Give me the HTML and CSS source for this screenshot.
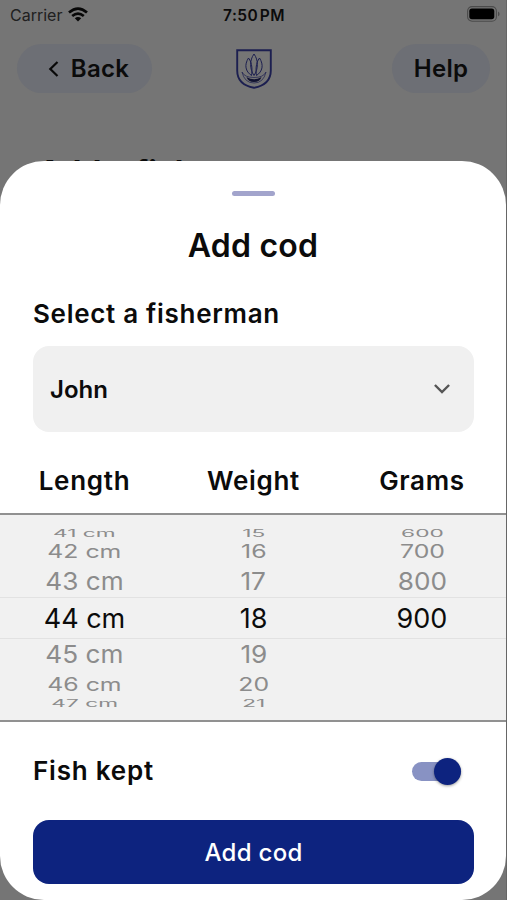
FILE: index.html
```html
<!DOCTYPE html>
<html lang="en">
<head>
<meta charset="utf-8">
<title>Add cod</title>
<link rel="stylesheet" href="styles.css">
</head>
<body>
<div class="screen">
  <div class="status">
    <div class="carrier"><span>Carrier</span>
      <svg width="20" height="15" viewBox="0 0 20 15" fill="none" stroke="#070707" stroke-width="2.7"><path d="M1 5.6Q10-2.3 19 5.6M4.2 9Q10 4.2 15.8 9"/><path d="M10 14.5l-3.2-3.3q3.2-2.5 6.4 0z" fill="#070707" stroke="none"/></svg>
    </div>
    <div class="time">7:50 PM</div>
    <div class="battery"><svg width="33" height="16" viewBox="0 0 33 16"><rect x=".6" y=".6" width="28.8" height="14.6" rx="4.5" fill="none" stroke="#4b4b4b" stroke-width="1.1"/><rect x="2.3" y="2.6" width="25" height="10.6" rx="2.6" fill="#000"/><path d="M31 5.5q1.6.7 1.6 2.4T31 10.3z" fill="#4b4b4b"/></svg></div>
  </div>
  <div class="nav">
    <div class="pill back"><svg width="11" height="18" viewBox="0 0 11 18" fill="none" stroke="#080808" stroke-width="2.2"><path d="M9.5 2L2.3 9l7.2 7"/></svg><span>Back</span></div>
    <svg class="crest" width="36" height="40" viewBox="0 0 36 40" fill="none" stroke="#1c1f50"><path d="M1.200 1.200h33.600v20.300c0 9.500-6.200 15.300-16.800 17.300C7.400 36.800 1.200 31 1.200 21.500z" stroke-width="1.900"/><path d="M18 5c-4.500 6-4.500 15 0 21.500M18 5c4.500 6 4.500 15 0 21.500M12.500 9c-4.500 7-3 13.500 3 17.500M23.500 9c4.500 7 3 13.500-3 17.500M12.500 9c4 5 3.800 13 3 17.500M23.500 9c-4 5-3.800 13-3 17.500" stroke-width="1"/><path d="M6 23q2.500 5.500 12 5.500T30 23q-2.500 11-12 11T6 23z" stroke-width=".7"/><path d="M10.500 28q7.500 4.500 15 0-1.500 5-7.500 5t-7.500-5z" fill="#111331" stroke="none"/></svg>
    <div class="pill help">Help</div>
  </div>
  <div class="page-title">Add a fish</div>
  <main class="sheet">
    <div class="grabber"></div>
    <h1>Add cod</h1>
    <h2>Select a fisherman</h2>
    <div class="select"><span>John</span><svg width="18" height="12" viewBox="0 0 18 12" fill="none" stroke="#555" stroke-width="2.400"><path d="M1.900 2L9 9.100 16.100 2"/></svg></div>
    <div class="heads"><div class="c1">Length</div><div class="c2">Weight</div><div class="c3">Grams</div></div>
    <div class="wheel">
      <div class="row far top"><div><b>41 cm</b></div><div><b>15</b></div><div><b>600</b></div></div>
      <div class="row mid above"><div><b>42 cm</b></div><div><b>16</b></div><div><b>700</b></div></div>
      <div class="row near before"><div><b>43 cm</b></div><div><b>17</b></div><div><b>800</b></div></div>
      <div class="row current"><div><b>44 cm</b></div><div><b>18</b></div><div><b>900</b></div></div>
      <div class="row near after"><div><b>45 cm</b></div><div><b>19</b></div><div></div></div>
      <div class="row mid below"><div><b>46 cm</b></div><div><b>20</b></div><div></div></div>
      <div class="row far last"><div><b>47 cm</b></div><div><b>21</b></div><div></div></div>
    </div>
    <div class="kept"><span>Fish kept</span><div class="toggle"><div class="knob"></div></div></div>
    <div class="submit">Add cod</div>
  </main>
</div>
</body>
</html>
```
FILE: styles.css
```css
* { box-sizing: border-box; }
body { margin: 0; font-family: Inter, "Liberation Sans", sans-serif; color: #0b0b0b; }
.screen { width: 507px; height: 900px; overflow: hidden; background: #757575; display: flex; flex-direction: column; border-right: 1px solid #666; }
.status { height: 30px; flex: none; display: grid; grid-template-columns: 1fr auto 1fr; align-items: center; padding: 0 6px 0 10px; font-size: 16px; }
.carrier { display: flex; align-items: center; gap: 6px; color: #202020; }
.carrier svg { margin-top: -2px; }
.time { font-weight: 600; letter-spacing: .5px; word-spacing: -3px; font-size: 15.5px; margin-left: -2px; }
.battery { display: flex; justify-content: flex-end; margin-top: -2px; }
.nav { height: 77px; flex: none; display: grid; grid-template-columns: 1fr 36px 1fr; align-items: center; padding: 0 16px 0 17px; }
.pill { height: 49px; border-radius: 25px; background: #6d6f75; display: flex; align-items: center; justify-content: center; font-size: 24px; font-weight: 600; letter-spacing: .3px; }
.back { width: 135px; gap: 12px; padding-left: 8px; }
.help { width: 98px; justify-self: end; }
.page-title { height: 54px; flex: none; padding: 49px 0 0 38px; font-size: 32px; line-height: 34px; font-weight: 700; white-space: nowrap; }
.sheet { height: 739px; flex: none; background: #fff; border-radius: 44px; overflow: hidden; display: flex; flex-direction: column; }
.grabber { width: 43px; height: 5px; flex: none; border-radius: 3px; background: #a2a4cc; margin: 30px auto 0; }
h1 { margin: 30px 0 0; height: 40px; line-height: 40px; font-size: 32px; font-weight: 600; letter-spacing: .2px; text-align: center; }
h2 { margin: 32px 0 0 33px; height: 32px; line-height: 32px; font-size: 26px; font-weight: 600; letter-spacing: .7px; }
.select { margin: 16px 32px 0 33px; height: 86px; flex: none; border-radius: 16px; background: #f0f0f0; padding: 0 23px 0 17px; display: flex; align-items: center; justify-content: space-between; font-size: 24px; font-weight: 600; }
.heads { height: 81px; flex: none; padding-top: 33px; line-height: 32px; display: grid; grid-template-columns: 169px 169px 168px; text-align: center; font-size: 26px; font-weight: 600; letter-spacing: .7px; }
.wheel { height: 209px; flex: none; background: #f1f1f1; border-top: 2px solid #919191; border-bottom: 2px solid #919191; padding-top: 12px; }
.row { display: grid; grid-template-columns: 169px 169px 168px; text-align: center; font-size: 27px; color: #8c8c8c; }
.row div { display: flex; align-items: center; justify-content: center; min-height: 0; white-space: nowrap; }
.row b { font-weight: 400; display: block; line-height: 30px; margin: -20px 0; }
.far { height: 12px; padding-top: 1px; }
.far b { transform: scale(.84,.36); }
.mid { height: 24px; padding-top: 1px; }
.mid b { transform: scale(.92,.68); }
.near { height: 34px; }
.near b { transform: scale(.97,.9); }
.before { padding-top: 3px; }
.current { height: 42px; color: #0b0b0b; border-top: 1px solid #e2e2e2; border-bottom: 1px solid #e2e2e2; }
.current div { padding-top: 2px; }
.after { height: 32px; }
.below { height: 27px; }
.last { height: 10px; }
.kept { height: 98px; flex: none; display: flex; align-items: center; justify-content: space-between; padding: 0 45px 0 33px; font-size: 26px; font-weight: 600; letter-spacing: .8px; line-height: 32px; }
.toggle { width: 49px; height: 19px; border-radius: 10px; background: #8892c3; display: flex; align-items: center; justify-content: flex-end; }
.knob { width: 27px; height: 27px; flex: none; border-radius: 50%; background: #0d237f; box-shadow: 0 1px 3px #0006; }
.submit { margin: 0 32px 0 33px; height: 64px; flex: none; border-radius: 16px; background: #0d237f; color: #fff; display: flex; align-items: center; justify-content: center; font-size: 24px; font-weight: 500; letter-spacing: .3px; }
```
